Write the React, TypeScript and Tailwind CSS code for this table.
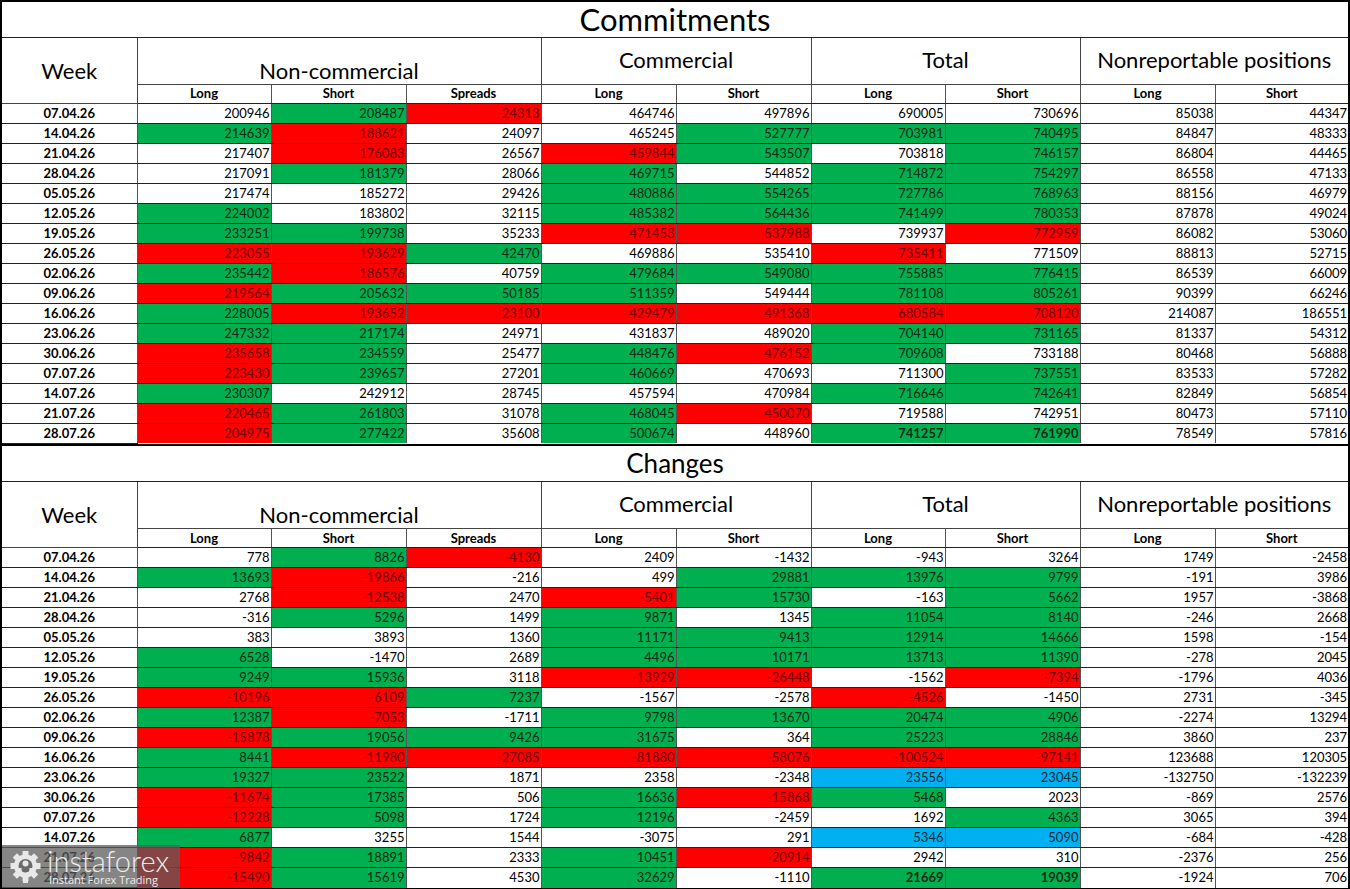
import React from "react";

type Cell = [string, string?];
type Row = { week: string; cells: Cell[]; bold?: boolean };

// g = green, r = red, b = blue, otherwise white
const commitments: Row[] = [
  { week: "07.04.26", cells: [["200946"], ["208487", "g"], ["24313", "r"], ["464746"], ["497896"], ["690005"], ["730696"], ["85038"], ["44347"]] },
  { week: "14.04.26", cells: [["214639", "g"], ["188621", "r"], ["24097"], ["465245"], ["527777", "g"], ["703981", "g"], ["740495", "g"], ["84847"], ["48333"]] },
  { week: "21.04.26", cells: [["217407"], ["176083", "r"], ["26567"], ["459844", "r"], ["543507", "g"], ["703818"], ["746157", "g"], ["86804"], ["44465"]] },
  { week: "28.04.26", cells: [["217091"], ["181379", "g"], ["28066"], ["469715", "g"], ["544852"], ["714872", "g"], ["754297", "g"], ["86558"], ["47133"]] },
  { week: "05.05.26", cells: [["217474"], ["185272"], ["29426"], ["480886", "g"], ["554265", "g"], ["727786", "g"], ["768963", "g"], ["88156"], ["46979"]] },
  { week: "12.05.26", cells: [["224002", "g"], ["183802"], ["32115"], ["485382", "g"], ["564436", "g"], ["741499", "g"], ["780353", "g"], ["87878"], ["49024"]] },
  { week: "19.05.26", cells: [["233251", "g"], ["199738", "g"], ["35233"], ["471453", "r"], ["537988", "r"], ["739937"], ["772959", "r"], ["86082"], ["53060"]] },
  { week: "26.05.26", cells: [["223055", "r"], ["193629", "r"], ["42470", "g"], ["469886"], ["535410"], ["735411", "r"], ["771509"], ["88813"], ["52715"]] },
  { week: "02.06.26", cells: [["235442", "g"], ["186576", "r"], ["40759"], ["479684", "g"], ["549080", "g"], ["755885", "g"], ["776415", "g"], ["86539"], ["66009"]] },
  { week: "09.06.26", cells: [["219564", "r"], ["205632", "g"], ["50185", "g"], ["511359", "g"], ["549444"], ["781108", "g"], ["805261", "g"], ["90399"], ["66246"]] },
  { week: "16.06.26", cells: [["228005", "g"], ["193652", "r"], ["23100", "r"], ["429479", "r"], ["491368", "r"], ["680584", "r"], ["708120", "r"], ["214087"], ["186551"]] },
  { week: "23.06.26", cells: [["247332", "g"], ["217174", "g"], ["24971"], ["431837"], ["489020"], ["704140", "g"], ["731165", "g"], ["81337"], ["54312"]] },
  { week: "30.06.26", cells: [["235658", "r"], ["234559", "g"], ["25477"], ["448476", "g"], ["476152", "r"], ["709608", "g"], ["733188"], ["80468"], ["56888"]] },
  { week: "07.07.26", cells: [["223430", "r"], ["239657", "g"], ["27201"], ["460669", "g"], ["470693"], ["711300"], ["737551", "g"], ["83533"], ["57282"]] },
  { week: "14.07.26", cells: [["230307", "g"], ["242912"], ["28745"], ["457594"], ["470984"], ["716646", "g"], ["742641", "g"], ["82849"], ["56854"]] },
  { week: "21.07.26", cells: [["220465", "r"], ["261803", "g"], ["31078"], ["468045", "g"], ["450070", "r"], ["719588"], ["742951"], ["80473"], ["57110"]] },
  { week: "28.07.26", bold: true, cells: [["204975", "r"], ["277422", "g"], ["35608"], ["500674", "g"], ["448960"], ["741257", "g"], ["761990", "g"], ["78549"], ["57816"]] },
];

const changes: Row[] = [
  { week: "07.04.26", cells: [["778"], ["8826", "g"], ["-4130", "r"], ["2409"], ["-1432"], ["-943"], ["3264"], ["1749"], ["-2458"]] },
  { week: "14.04.26", cells: [["13693", "g"], ["-19866", "r"], ["-216"], ["499"], ["29881", "g"], ["13976", "g"], ["9799", "g"], ["-191"], ["3986"]] },
  { week: "21.04.26", cells: [["2768"], ["-12538", "r"], ["2470"], ["-5401", "r"], ["15730", "g"], ["-163"], ["5662", "g"], ["1957"], ["-3868"]] },
  { week: "28.04.26", cells: [["-316"], ["5296", "g"], ["1499"], ["9871", "g"], ["1345"], ["11054", "g"], ["8140", "g"], ["-246"], ["2668"]] },
  { week: "05.05.26", cells: [["383"], ["3893"], ["1360"], ["11171", "g"], ["9413", "g"], ["12914", "g"], ["14666", "g"], ["1598"], ["-154"]] },
  { week: "12.05.26", cells: [["6528", "g"], ["-1470"], ["2689"], ["4496", "g"], ["10171", "g"], ["13713", "g"], ["11390", "g"], ["-278"], ["2045"]] },
  { week: "19.05.26", cells: [["9249", "g"], ["15936", "g"], ["3118"], ["-13929", "r"], ["-26448", "r"], ["-1562"], ["-7394", "r"], ["-1796"], ["4036"]] },
  { week: "26.05.26", cells: [["-10196", "r"], ["-6109", "r"], ["7237", "g"], ["-1567"], ["-2578"], ["-4526", "r"], ["-1450"], ["2731"], ["-345"]] },
  { week: "02.06.26", cells: [["12387", "g"], ["-7053", "r"], ["-1711"], ["9798", "g"], ["13670", "g"], ["20474", "g"], ["4906", "g"], ["-2274"], ["13294"]] },
  { week: "09.06.26", cells: [["-15878", "r"], ["19056", "g"], ["9426", "g"], ["31675", "g"], ["364"], ["25223", "g"], ["28846", "g"], ["3860"], ["237"]] },
  { week: "16.06.26", cells: [["8441", "g"], ["-11980", "r"], ["-27085", "r"], ["-81880", "r"], ["-58076", "r"], ["-100524", "r"], ["-97141", "r"], ["123688"], ["120305"]] },
  { week: "23.06.26", cells: [["19327", "g"], ["23522", "g"], ["1871"], ["2358"], ["-2348"], ["23556", "b"], ["23045", "b"], ["-132750"], ["-132239"]] },
  { week: "30.06.26", cells: [["-11674", "r"], ["17385", "g"], ["506"], ["16636", "g"], ["-15868", "r"], ["5468", "g"], ["2023"], ["-869"], ["2576"]] },
  { week: "07.07.26", cells: [["-12228", "r"], ["5098", "g"], ["1724"], ["12196", "g"], ["-2459"], ["1692"], ["4363", "g"], ["3065"], ["394"]] },
  { week: "14.07.26", cells: [["6877", "g"], ["3255"], ["1544"], ["-3075"], ["291"], ["5346", "b"], ["5090", "b"], ["-684"], ["-428"]] },
  { week: "21.07.26", cells: [["-9842", "r"], ["18891", "g"], ["2333"], ["10451", "g"], ["-20914", "r"], ["2942"], ["310"], ["-2376"], ["256"]] },
  { week: "28.07.26", bold: true, cells: [["-15490", "r"], ["15619", "g"], ["4530"], ["32629", "g"], ["-1110"], ["21669", "g"], ["19039", "g"], ["-1924"], ["706"]] },
];

const widths = [135, 134, 135, 135, 135, 135, 134, 135, 135, 133];

const fill = (c?: string) => {
  if (c === "g") return "bg-[#00b050] text-[#0d2a12]";
  if (c === "r") return "bg-[#ff0000] text-[#6e0000]";
  if (c === "b") return "bg-[#00b0f0] text-[#062b3a]";
  return "bg-white text-black";
};

const Section = ({ title, rows, first }: { title: string; rows: Row[]; first?: boolean }) => (
  <table className={`table-fixed border-collapse w-full ${first ? "" : "border-t-2 border-black"}`}>
    <colgroup>
      {widths.map((w, i) => (
        <col key={i} style={{ width: w }} />
      ))}
    </colgroup>
    <thead>
      <tr className={first ? "h-[35px]" : "h-[37px]"}>
        <th
          colSpan={10}
          className={`border-b border-[#222] font-normal leading-none text-black ${first ? "text-[31px]" : "text-[26px]"}`}
        >
          {title}
        </th>
      </tr>
      <tr className="h-[47px]">
        <th rowSpan={2} className="border-r border-b border-[#444] font-normal text-[22px] text-black">
          Week
        </th>
        <th colSpan={3} className="border-r border-b border-[#444] font-normal text-[22px] leading-[26px] text-black align-bottom pb-0">
          Non-commercial
        </th>
        <th colSpan={2} className="border-r border-b border-[#444] font-normal text-[22px] text-black pb-[3px]">
          Commercial
        </th>
        <th colSpan={2} className="border-r border-b border-[#444] font-normal text-[22px] text-black pb-[3px]">
          Total
        </th>
        <th colSpan={2} className="border-b border-[#444] font-normal text-[22px] text-black pb-[3px]">
          Nonreportable positions
        </th>
      </tr>
      <tr className="h-[19px]">
        {["Long", "Short", "Spreads", "Long", "Short", "Long", "Short", "Long", "Short"].map((h, i) => (
          <th key={i} className={`border-b border-[#222] text-[13px] font-bold leading-none text-black ${i < 8 ? "border-r border-r-[#555]" : ""}`}>
            {h}
          </th>
        ))}
      </tr>
    </thead>
    <tbody>
      {rows.map((r, ri) => (
        <tr key={ri} className="h-[20px]">
          <td className="border-r border-b border-[#222] border-r-[#555] text-center text-[13px] font-bold leading-none text-black">
            {r.week}
          </td>
          {r.cells.map(([v, c], ci) => (
            <td
              key={ci}
              className={`border-b border-[#222] text-right pr-px text-[13px] leading-none ${fill(c)} ${ci < 8 ? "border-r border-r-[#555]" : ""} ${r.bold && (ci === 5 || ci === 6) ? "font-bold" : ""} ${ri === rows.length - 1 ? "border-b-0" : ""}`}
            >
              {v}
            </td>
          ))}
        </tr>
      ))}
    </tbody>
  </table>
);

// instaforex watermark in the lower-left corner
const Watermark = () => (
  <div className="absolute left-0 bottom-0 w-[178px] h-[43px] bg-[#5c5c5c]/75 flex items-center gap-[4px] pl-[6px]">
    <svg width="35" height="32" viewBox="0 0 35 32" className="shrink-0">
      <g fill="#e8e8e8">
        <circle cx="17.5" cy="15" r="11.5" />
        {Array.from({ length: 8 }).map((_, i) => (
          <rect key={i} x="14.5" y="0" width="6" height="7" transform={`rotate(${i * 45} 17.5 15)`} />
        ))}
      </g>
      <circle cx="17.5" cy="15" r="7" fill="#6a6a6a" />
      <path d="M10 17 C10 24 14 25 15 25 L15 32 L20 32 L20 25 C21 25 25 24 25 17 L21.5 17 C21.5 21 20 21.5 17.5 21.5 C15 21.5 13.5 21 13.5 17 Z" fill="#e8e8e8" />
      <circle cx="17.5" cy="12.5" r="3" fill="#e8e8e8" />
    </svg>
    <div className="flex flex-col leading-none text-[#ededed]">
      <span className="text-[29px] font-light leading-[25px] [font-family:Lato,sans-serif]">instaforex</span>
      <span className="text-[11px] leading-[13px] pl-[2px] [font-family:'Open_Sans',sans-serif]">Instant Forex Trading</span>
    </div>
  </div>
);

export default function App() {
  return (
    <div className="w-[1350px] h-[889px] bg-white overflow-hidden [font-family:Lato,'Liberation_Sans',sans-serif]">
      <div className="relative border-2 border-black">
        <Section title="Commitments" rows={commitments} first />
        <Section title="Changes" rows={changes} />
        <Watermark />
      </div>
    </div>
  );
}
